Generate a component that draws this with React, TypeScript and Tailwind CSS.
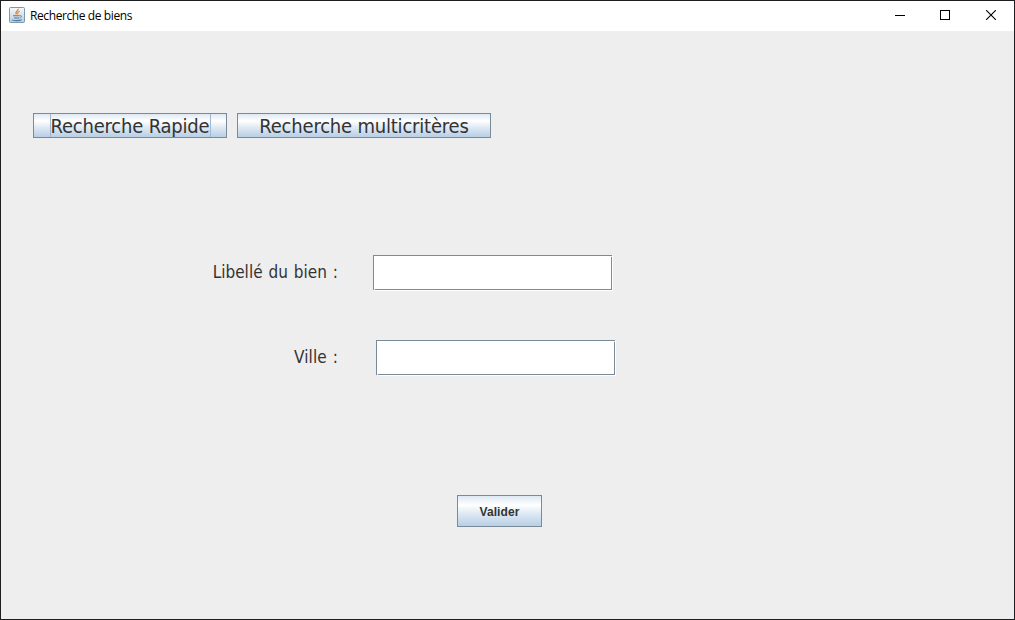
import type { ReactNode } from "react";

function JavaIcon() {
  return (
    <svg className="mb-0.5" width="16" height="16" viewBox="0 0 16 16" fill="none">
      <defs>
        <linearGradient id="tile" x1="0" y1="0" x2="0" y2="1">
          <stop offset="0" stopColor="#f7fafc" />
          <stop offset="1" stopColor="#b9cbdb" />
        </linearGradient>
      </defs>
      <rect x="0.5" y="0.5" width="15" height="15" rx="1" fill="url(#tile)" stroke="#7d97ad" />
      <path d="M9.2 1.8C9.8 3.8 5.4 4.5 7.4 7.4" stroke="#e8822d" strokeWidth="1.3" />
      <path d="M10.8 4.2C8.4 5.1 8.3 5.7 9 7.4" stroke="#e8822d" strokeWidth="1.1" />
      <path d="M4 8.7H10.4M5 11H10" stroke="#4f7ba1" strokeWidth="1.1" />
      <path d="M10.6 8.6C13.2 8.2 12.8 10.4 10.6 10.9" stroke="#4f7ba1" strokeWidth="0.9" />
      <path d="M3 12.9C4.5 13.9 10.5 13.9 12.6 12.7" stroke="#4f7ba1" strokeWidth="1.1" />
    </svg>
  );
}

function TitleBar() {
  return (
    <header className="flex h-[30px] shrink-0 items-center bg-white pl-2">
      <JavaIcon />
      <h1 className="ml-[5px] whitespace-nowrap font-['Open_Sans','Noto_Sans',sans-serif] text-[12px] leading-4 tracking-[-0.4px] text-black">
        Recherche de biens
      </h1>
      <div className="ml-auto flex self-start">
        <button aria-label="Réduire" className="flex h-7 w-[46px] items-center justify-center">
          <svg width="10" height="10" shapeRendering="crispEdges"><path d="M0 5.5H10" stroke="#000" /></svg>
        </button>
        <button aria-label="Agrandir" className="flex h-7 w-11 items-center justify-center">
          <svg width="10" height="10" shapeRendering="crispEdges"><rect x="0.5" y="0.5" width="9" height="9" fill="none" stroke="#000" /></svg>
        </button>
        <button aria-label="Fermer" className="flex h-7 w-[47px] items-center justify-center pl-px">
          <svg width="10" height="10"><path d="M0 0L10 10M10 0L0 10" stroke="#000" strokeWidth="1.1" /></svg>
        </button>
      </div>
    </header>
  );
}

function MetalButton({ className, children }: { className: string; children: ReactNode }) {
  return (
    <button
      className={`flex items-center justify-center whitespace-nowrap border border-[#7a8a99] bg-[linear-gradient(180deg,#dde8f3_0%,#ffffff_30%,#dde8f3_60%,#b8cfe5_100%)] text-[#333333] ${className}`}
    >
      {children}
    </button>
  );
}

function TextField({ label }: { label: string }) {
  return (
    <span className="relative flex">
      <input
        aria-label={label}
        className="h-[35px] w-[239px] border border-[#7a8a99] bg-white px-1 text-[#333333] shadow-[1px_1px_0_#ffffff] outline-none"
      />
      <span className="absolute bottom-0 left-px size-px bg-[#eeeeee]" />
      <span className="absolute right-0 top-px size-px bg-[#eeeeee]" />
    </span>
  );
}

export default function App() {
  return (
    <div className="flex h-[620px] w-[1015px] flex-col overflow-hidden border border-[#1e1e20] bg-[#eeeeee]">
      <TitleBar />
      <main className="flex flex-col">
        <nav className="ml-8 mt-[82px] flex gap-2.5 font-['DejaVu_Sans_Condensed','DejaVu_Sans',sans-serif] text-[20px] leading-5">
          <MetalButton className="h-[25px] w-[194px]">
            <span className="flex h-[23px] w-[161px] items-center justify-center border-x border-[#a3b8cc] tracking-[-0.2px]">
              Recherche Rapide
            </span>
          </MetalButton>
          <MetalButton className="h-[25px] w-[254px] tracking-[-0.2px]">Recherche multicritères</MetalButton>
        </nav>
        <form className="mt-[117px] flex flex-col font-['DejaVu_Sans_Condensed','DejaVu_Sans',sans-serif] text-[17px] text-[#333333]">
          <div className="flex items-center">
            <span className="mr-[35px] w-[337px] whitespace-nowrap text-right tracking-[0.02px] [word-spacing:1px]">Libellé du bien :</span>
            <TextField label="Libellé du bien" />
          </div>
          <div className="mt-[50px] flex items-center">
            <span className="mr-[38px] w-[337px] whitespace-nowrap text-right tracking-[0.1px] [word-spacing:1px]">Ville :</span>
            <TextField label="Ville" />
          </div>
          <div className="ml-[456px] mt-[120px] flex">
            <MetalButton className="h-8 w-[85px] pt-0.5 font-['Liberation_Sans',Arial,sans-serif] text-[12px] font-bold tracking-[0.1px]">
              Valider
            </MetalButton>
          </div>
        </form>
      </main>
    </div>
  );
}
